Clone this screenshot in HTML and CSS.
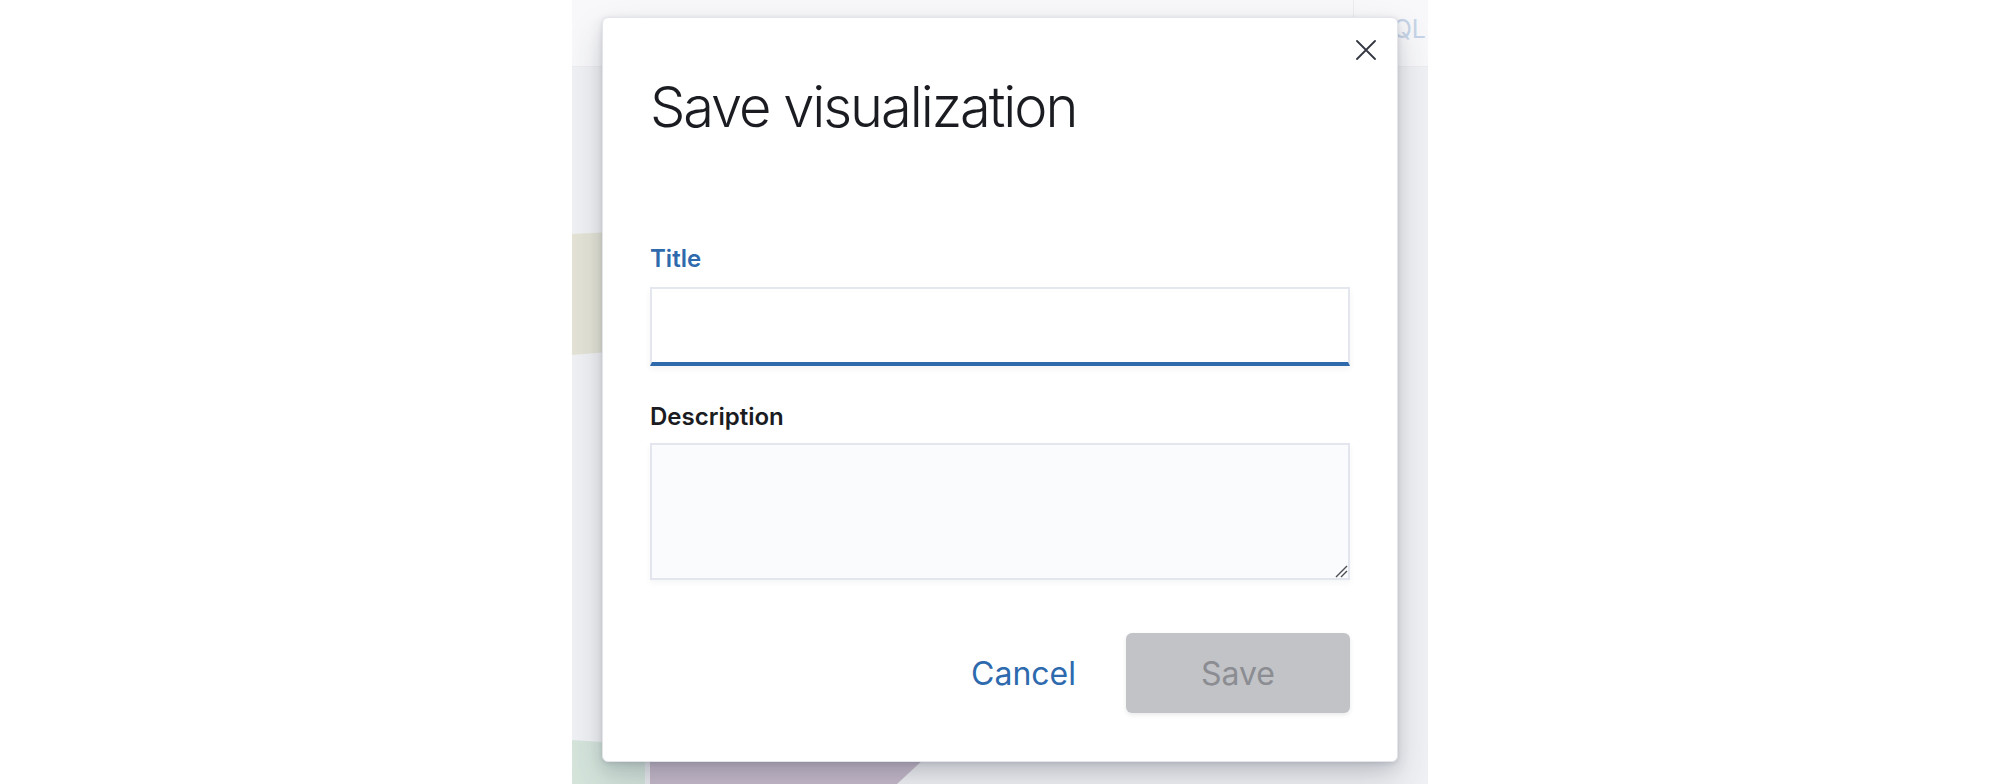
FILE: index.html
```html
<!DOCTYPE html>
<html lang="en">
<head>
<meta charset="utf-8">
<title>Save visualization</title>
<link rel="stylesheet" href="styles.css">
</head>
<body>
  <div class="app">
    <div class="topbar">
      <div class="lang-switch"><span class="kql">KQL</span></div>
    </div>
    <div class="workspace">
      <svg class="chart" width="856" height="717" viewBox="0 67 856 717" aria-hidden="true">
        <polygon points="0,234 120,228 120,345 0,355" fill="#e4e3d6"/>
        <polygon points="0,740 73,745 73,784 0,784" fill="#d5e5dc"/>
        <rect x="73" y="740" width="5" height="44" fill="#e9eaee"/>
        <polygon points="78,745 367,745 325,784 78,784" fill="#c6b9ca"/>
      </svg>
    </div>
    <div class="mask">
      <div class="modal" role="dialog">
        <button class="close" aria-label="Close">
          <svg width="20" height="20" viewBox="0 0 20 20"><path d="M1 1 L19 19 M19 1 L1 19" stroke="#343741" stroke-width="1.8" fill="none" stroke-linecap="round"/></svg>
        </button>
        <h2 class="modal-title">Save visualization</h2>
        <form class="form">
          <div class="field">
            <label class="label label-active">Title</label>
            <input class="input input-focus" type="text">
          </div>
          <div class="field field-desc">
            <label class="label label-desc">Description</label>
            <div class="textarea-wrap">
              <textarea class="textarea"></textarea>
              <svg class="grip" width="14" height="14" viewBox="0 0 14 14" aria-hidden="true"><path d="M13 2 L2 13 M13 7 L7 13" stroke="#4a4c52" stroke-width="1.4" fill="none"/></svg>
            </div>
          </div>
          <div class="footer">
            <button type="button" class="btn-empty">Cancel</button>
            <button type="button" class="btn-save" disabled>Save</button>
          </div>
        </form>
      </div>
    </div>
  </div>
</body>
</html>
```
FILE: styles.css
```css
* { box-sizing: border-box; }
html, body { margin: 0; padding: 0; background: #ffffff; }
body {
  display: flex;
  justify-content: center;
  font-family: Inter, "Noto Sans", "Liberation Sans", sans-serif;
  height: 784px;
  overflow: hidden;
}
.app {
  position: relative;
  width: 856px;
  height: 784px;
  background: #f0f1f4;
  overflow: hidden;
  display: flex;
  flex-direction: column;
}
.topbar {
  height: 67px;
  background: #f8f8fa;
  border-bottom: 1px solid #ececf0;
  display: flex;
  justify-content: flex-end;
}
.lang-switch {
  width: 75px;
  border-left: 1px solid #ebecf0;
  display: flex;
  justify-content: flex-end;
  padding: 14px 2px 0 0;
}
.kql {
  font-size: 25px;
  color: #c6d4e7;
  line-height: 30px;
}
.workspace { flex: 1; position: relative; }
.chart { position: absolute; left: 0; top: 0; }
.mask {
  position: absolute;
  inset: 0;
  display: flex;
  justify-content: center;
  align-items: flex-start;
  padding-top: 17px;
}
.modal {
  position: relative;
  width: 796px;
  background: #ffffff;
  border-radius: 6px;
  border: 1px solid #e3e5ea;
  box-shadow: 0 1px 4px rgba(40, 48, 64, 0.12), 0 6px 14px rgba(40, 48, 64, 0.12), 0 18px 36px rgba(40, 48, 64, 0.18);
  padding: 56px 47px 48px;
}
.close {
  position: absolute;
  top: 22px;
  right: 21px;
  width: 20px;
  height: 20px;
  padding: 0;
  border: 0;
  background: none;
  display: flex;
}
.modal-title {
  margin: 0;
  font-size: 56px;
  line-height: 67px;
  font-weight: 300;
  letter-spacing: -0.037em;
  color: #1a1c21;
}
.form { margin-top: 103px; display: flex; flex-direction: column; }
.field { display: flex; flex-direction: column; }
.field-desc { margin-top: 36px; }
.label {
  font-size: 24px;
  line-height: 29px;
  font-weight: 600;
  color: #1a1c21;
  margin-bottom: 14px;
}
.label-desc { margin-bottom: 12px; }
.label-active { color: #2f6aad; }
.input {
  width: 100%;
  height: 79px;
  border: 2px solid #e4e7ed;
  border-bottom: 4px solid #2f6aad;
  background: #ffffff;
  box-shadow: 0 3px 6px rgba(60, 70, 90, 0.06);
  outline: none;
  font: inherit;
  margin: 0;
}
.textarea-wrap { position: relative; display: flex; }
.textarea {
  width: 100%;
  height: 137px;
  border: 2px solid #e3e6ee;
  background: #fafbfd;
  box-shadow: 0 3px 6px rgba(60, 70, 90, 0.05);
  resize: none;
  font: inherit;
  margin: 0;
  outline: none;
}
.grip {
  position: absolute;
  right: 2px;
  bottom: 2px;
}
.footer {
  margin-top: 53px;
  display: flex;
  justify-content: flex-end;
  align-items: center;
}
.btn-empty {
  background: none;
  border: 0;
  font-family: inherit;
  font-size: 32px;
  font-weight: 400;
  color: #2e6aae;
  padding: 0 24px;
  height: 80px;
  margin-right: 26px;
}
.btn-save {
  width: 224px;
  height: 80px;
  border: 0;
  border-radius: 6px;
  background: #c2c3c7;
  color: #8b8d92;
  font-family: inherit;
  font-size: 32px;
  font-weight: 400;
  box-shadow: 0 2px 4px rgba(40, 48, 64, 0.1);
}
```
